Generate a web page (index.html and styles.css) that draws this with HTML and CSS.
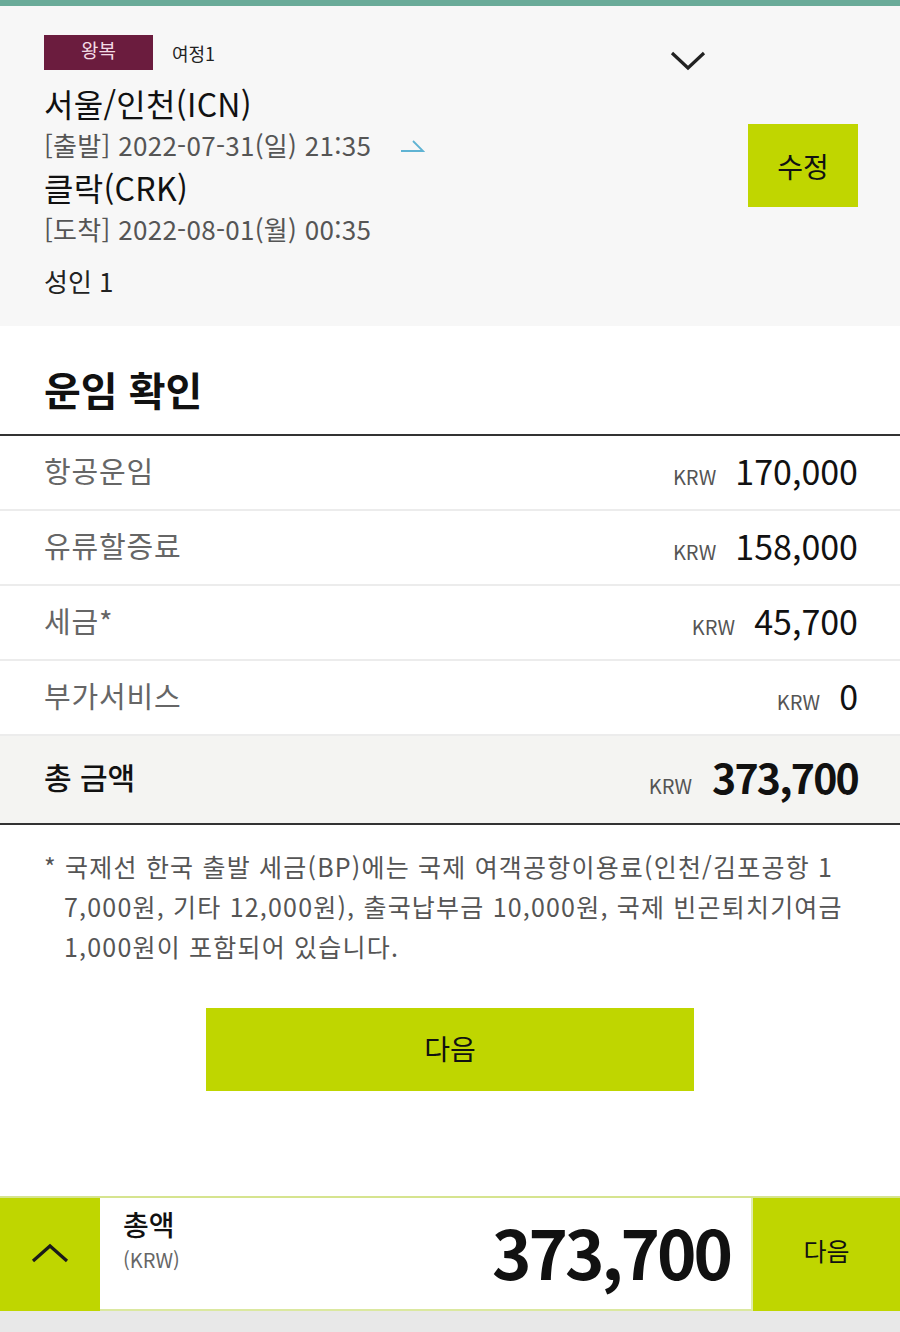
FILE: index.html
```html
<!DOCTYPE html>
<html lang="ko">
<head>
<meta charset="utf-8">
<title>운임 확인</title>
<link rel="stylesheet" href="styles.css">
</head>
<body>
<div class="topline"></div>
<section class="trip">
  <div class="trip-info">
    <div class="trip-head">
      <div class="trip-head-left">
        <span class="badge">왕복</span>
        <span class="leg">여정1</span>
      </div>
      <svg class="chev" width="36" height="22" viewBox="0 0 36 22"><path d="M2 3 L18 18 L34 3" fill="none" stroke="#222" stroke-width="3.2"/></svg>
    </div>
    <div class="city">서울/인천(ICN)</div>
    <div class="when">[출발] 2022-07-31(일) 21:35<svg class="arrow" width="24" height="14" viewBox="0 0 24 14"><path d="M0 12 H22 L12 2" fill="none" stroke="#5fb3d3" stroke-width="1.8"/></svg></div>
    <div class="city">클락(CRK)</div>
    <div class="when">[도착] 2022-08-01(월) 00:35</div>
    <div class="pax">성인 1</div>
  </div>
  <button class="edit">수정</button>
</section>

<section class="fare">
  <h2 class="fare-title">운임 확인</h2>
  <div class="fare-list">
    <div class="fare-row"><span class="fare-label">항공운임</span><span class="fare-val"><span class="cur">KRW</span><span class="amt">170,000</span></span></div>
    <div class="fare-row"><span class="fare-label">유류할증료</span><span class="fare-val"><span class="cur">KRW</span><span class="amt">158,000</span></span></div>
    <div class="fare-row"><span class="fare-label">세금*</span><span class="fare-val"><span class="cur">KRW</span><span class="amt">45,700</span></span></div>
    <div class="fare-row"><span class="fare-label">부가서비스</span><span class="fare-val"><span class="cur">KRW</span><span class="amt">0</span></span></div>
    <div class="fare-row total"><span class="fare-label">총 금액</span><span class="fare-val"><span class="cur">KRW</span><span class="amt">373,700</span></span></div>
  </div>
  <p class="note">* 국제선 한국 출발 세금(BP)에는 국제 여객공항이용료(인천/김포공항 1<br>7,000원, 기타 12,000원), 출국납부금 10,000원, 국제 빈곤퇴치기여금<br>1,000원이 포함되어 있습니다.</p>
  <button class="next">다음</button>
</section>

<footer class="bar">
  <div class="bar-toggle"><svg width="40" height="22" viewBox="0 0 40 22"><path d="M3 19 L20 4 L37 19" fill="none" stroke="#1a1a1a" stroke-width="3.2"/></svg></div>
  <div class="bar-sum">
    <div class="bar-label"><span class="bar-title">총액</span><span class="bar-cur">(KRW)</span></div>
    <div class="bar-amt">373,700</div>
  </div>
  <button class="bar-next">다음</button>
</footer>
<div class="bottom-gray"></div>
</body>
</html>
```

FILE: styles.css
```css
* { box-sizing: border-box; }
html, body { margin: 0; padding: 0; }
body {
  width: 900px;
  background: #ffffff;
  font-family: "Noto Sans CJK KR", "Noto Sans", sans-serif;
  color: #111;
}
button { font-family: inherit; border: none; cursor: pointer; padding: 0; }

.topline { height: 6px; background: #6aab99; }

.trip {
  background: #f7f7f7;
  display: flex;
  align-items: center;
  gap: 43px;
  padding: 28px 42px 27px 44px;
}
.trip-info { flex: 1; }
.trip-head {
  display: flex;
  justify-content: space-between;
  align-items: flex-start;
  height: 35px;
}
.trip-head-left { display: flex; align-items: center; gap: 19px; }
.badge {
  width: 109px;
  height: 35px;
  background: #6b1c3e;
  color: #f3dce6;
  font-size: 19px;
  line-height: 29px;
  text-align: center;
}
.leg { font-size: 18px; line-height: 35px; color: #222; padding-top: 2px; }
.chev { margin-top: 16px; margin-right: -1px; }
.city { font-size: 32px; line-height: 42px; color: #111; letter-spacing: 0.3px; }
.trip-head + .city { margin-top: 13px; }
.when { font-size: 26px; line-height: 42px; color: #555; display: flex; align-items: center; letter-spacing: 0.3px; }
.arrow { margin-left: 30px; margin-top: 2px; }
.pax { font-size: 26px; line-height: 36px; margin-top: 13px; color: #222; }
.edit {
  width: 110px;
  height: 83px;
  background: #c0d600;
  color: #111;
  font-size: 28px;
  margin-top: -2px;
}

.fare-title {
  margin: 0;
  font-size: 40px;
  font-weight: 700;
  line-height: 46px;
  padding: 40px 44px 22px;
  border-bottom: 2px solid #333;
}
.fare-row {
  display: flex;
  justify-content: space-between;
  align-items: center;
  height: 75px;
  padding: 0 42px 5px 44px;
  border-bottom: 2px solid #ececec;
}
.fare-label { font-size: 29px; color: #666; letter-spacing: 0.8px; }
.fare-val { display: flex; align-items: baseline; gap: 19px; }
.cur { font-size: 20px; color: #555; }
.amt { font-size: 34px; color: #111; }
.fare-row.total {
  height: 89px;
  background: #f4f4f2;
  border-bottom: 2px solid #333;
  padding-bottom: 8px;
}
.total .fare-label { color: #111; font-size: 30px; font-weight: 500; letter-spacing: 0; }
.total .amt { font-size: 41px; font-weight: 700; letter-spacing: -1.8px; }
.total .fare-val { gap: 20px; }

.note {
  margin: 21px 0 0;
  padding: 0 10px 0 64px;
  text-indent: -20px;
  font-size: 25px;
  line-height: 40px;
  color: #555;
  letter-spacing: 1.2px;
  word-break: break-all;
}
.next {
  display: block;
  width: 488px;
  height: 83px;
  margin: 42px auto 0;
  background: #bfd600;
  color: #111;
  font-size: 28px;
  padding-bottom: 4px;
}

.bar {
  margin-top: 105px;
  display: flex;
  height: 115px;
  background: #bfd600;
  border-top: 2px solid #d6e48f;
}
.bar-toggle {
  width: 100px;
  display: flex;
  align-items: center;
  justify-content: center;
  padding-bottom: 4px;
}
.bar-sum {
  width: 653px;
  background: #fff;
  border-right: 2px solid #e0ecb0;
  border-bottom: 2px solid #dbe8a0;
  display: flex;
  justify-content: space-between;
  align-items: flex-start;
  padding: 6px 21px 0 23px;
}
.bar-label { display: flex; flex-direction: column; }
.bar-title { font-size: 28px; font-weight: 500; line-height: 41px; }
.bar-cur { font-size: 20px; color: #666; line-height: 29px; }
.bar-amt {
  font-size: 67px;
  font-weight: 700;
  letter-spacing: -3px;
  line-height: 90px;
  margin-top: 2px;
}
.bar-next {
  flex: 1;
  background: #bfd600;
  color: #111;
  font-size: 25px;
  padding-bottom: 10px;
}
.bottom-gray { height: 22px; background: #e8e8e8; }
```
